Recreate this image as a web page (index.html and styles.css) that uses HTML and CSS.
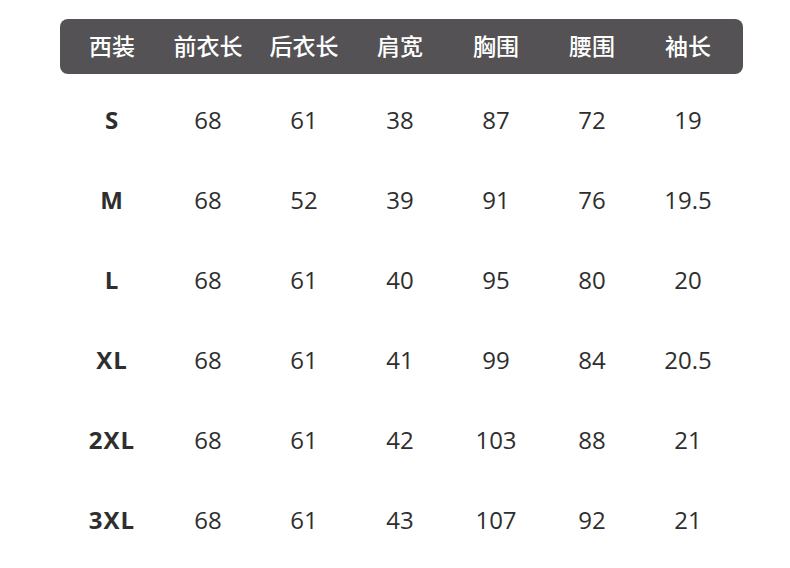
FILE: index.html
```html
<!DOCTYPE html>
<html lang="zh">
<head>
<meta charset="utf-8">
<link rel="stylesheet" href="styles.css">
</head>
<body>
<div class="page">
  <div class="head">
    <div>西装</div><div>前衣长</div><div>后衣长</div><div>肩宽</div><div>胸围</div><div>腰围</div><div>袖长</div>
  </div>
  <div class="rows">
    <div class="row"><div class="size">S</div><div>68</div><div>61</div><div>38</div><div>87</div><div>72</div><div>19</div></div>
    <div class="row"><div class="size">M</div><div>68</div><div>52</div><div>39</div><div>91</div><div>76</div><div>19.5</div></div>
    <div class="row"><div class="size">L</div><div>68</div><div>61</div><div>40</div><div>95</div><div>80</div><div>20</div></div>
    <div class="row"><div class="size">XL</div><div>68</div><div>61</div><div>41</div><div>99</div><div>84</div><div>20.5</div></div>
    <div class="row"><div class="size">2XL</div><div>68</div><div>61</div><div>42</div><div>103</div><div>88</div><div>21</div></div>
    <div class="row"><div class="size">3XL</div><div>68</div><div>61</div><div>43</div><div>107</div><div>92</div><div>21</div></div>
  </div>
</div>
</body>
</html>
```
FILE: styles.css
```css
html, body { margin: 0; padding: 0; background: #fff; }
.page {
  width: 790px;
  height: 568px;
  padding-top: 19px;
  box-sizing: border-box;
}
.head {
  margin-left: 60px;
  width: 683px;
  height: 55px;
  box-sizing: border-box;
  padding-left: 4px;
  padding-bottom: 3px;
  background: #545254;
  border-radius: 8px;
  display: grid;
  grid-template-columns: repeat(7, 96px);
  align-items: center;
  color: #fff;
  font-family: "Noto Sans CJK SC", "Noto Sans", sans-serif;
  font-size: 23px;
  font-weight: 500;
}
.head > div { text-align: center; }
.rows { margin-top: 5px; margin-left: 64px; }
.row {
  display: grid;
  grid-template-columns: repeat(7, 96px);
  height: 80px;
  align-items: center;
  font-family: "Open Sans", "Noto Sans", sans-serif;
  font-size: 24px;
  color: #2e2e2e;
}
.row > div { text-align: center; }
.row .size { font-weight: 700; letter-spacing: 1px; }
```
